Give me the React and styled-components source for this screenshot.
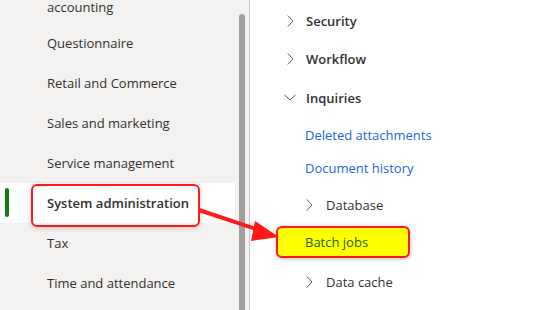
import React from 'react';
import styled, { createGlobalStyle } from 'styled-components';

const GlobalStyle = createGlobalStyle`
  html, body {
    margin: 0;
    padding: 0;
    background: #ffffff;
  }
  body {
    font-family: "Open Sans", "Noto Sans", sans-serif;
    font-size: 13px;
    color: #323130;
  }
`;

/* Page frame */
const Page = styled.div`
  position: relative;
  display: flex;
  width: 545px;
  height: 310px;
  overflow: hidden;
  background: #ffffff;
`;

/* Left module list */
const Sidebar = styled.nav`
  display: flex;
  width: 249px;
  height: 100%;
  background: #f3f2f1;
  border-right: 1px solid #c8c6c4;
  flex-shrink: 0;
  overflow: hidden;
`;

const ModuleList = styled.ul`
  list-style: none;
  margin: -30px 0 0;
  padding: 0;
  width: 235px;
`;

const ModuleItem = styled.li`
  position: relative;
  display: flex;
  align-items: center;
  box-sizing: border-box;
  min-height: 40px;
  padding: ${p => (p.wrapped ? '10px 20px 7px 47px' : '0 20px 0 47px')};
  line-height: ${p => (p.wrapped ? '18px' : '20px')};
  font-weight: ${p => (p.active ? 600 : 400)};
  background: ${p => (p.active ? '#ffffff' : 'transparent')};
  color: #323130;
`;

const ActiveMarker = styled.span`
  position: absolute;
  left: 5px;
  top: 5px;
  width: 4px;
  height: 29px;
  border-radius: 2px;
  background: #107c10;
`;

/* Red annotation frame around a label, kept out of the flow by negative margins */
const Callout = styled.span`
  display: inline-block;
  margin: -9px -11px -14px -16px;
  padding: 7px 9px 12px 14px;
  border: 2px solid #ff1a1a;
  border-radius: 6px;
  box-shadow: 0 1px 5px rgba(0, 0, 0, 0.22);
`;

const ScrollTrack = styled.div`
  flex: 1;
  padding: 14px 0 0 4px;
`;

const ScrollThumb = styled.div`
  width: 6px;
  height: 100%;
  border-radius: 3px 3px 0 0;
  background: #a19f9d;
`;

/* Right tree */
const Tree = styled.div`
  flex: 1;
  padding-top: 2px;
`;

const TreeRow = styled.div`
  display: flex;
  align-items: center;
  height: ${p => p.h}px;
  padding-left: ${p => p.indent}px;
  gap: ${p => p.gap || 0}px;
  font-weight: ${p => (p.strong ? 600 : 400)};
  color: ${p => (p.link ? '#2266e3' : '#323130')};
  line-height: 20px;
  white-space: nowrap;
`;

const ChevronBox = styled.span`
  display: flex;
  align-items: center;
  justify-content: center;
  width: 16px;
  height: 16px;
`;

const Highlight = styled.span`
  display: inline-block;
  box-sizing: border-box;
  width: 134px;
  height: 32px;
  margin-left: -29px;
  padding: 4px 0 4px 27px;
  border: 2px solid #ff1a1a;
  border-radius: 6px;
  background: #ffff00;
  color: #226600;
  box-shadow: 0 1px 5px rgba(0, 0, 0, 0.25);
`;

const ArrowLayer = styled.svg`
  position: absolute;
  left: 0;
  top: 0;
  pointer-events: none;
`;

const Chevron = ({ down }) => (
  <ChevronBox>
    {down ? (
      <svg width="12" height="7" viewBox="0 0 12 7">
        <path d="M0.5 0.8 L6 6 L11.5 0.8" fill="none" stroke="#605e5c" strokeWidth="1" />
      </svg>
    ) : (
      <svg width="7" height="12" viewBox="0 0 7 12">
        <path d="M0.8 0.5 L6 6 L0.8 11.5" fill="none" stroke="#605e5c" strokeWidth="1" />
      </svg>
    )}
  </ChevronBox>
);

const modules = [
  'Questionnaire',
  'Retail and Commerce',
  'Sales and marketing',
  'Service management',
  'System administration',
  'Tax',
  'Time and attendance',
];

export default function App() {
  return (
    <Page>
      <GlobalStyle />
      <Sidebar>
        <ModuleList>
          <ModuleItem wrapped>Project management and accounting</ModuleItem>
          {modules.map(m =>
            m === 'System administration' ? (
              <ModuleItem key={m} active>
                <ActiveMarker />
                <Callout>{m}</Callout>
              </ModuleItem>
            ) : (
              <ModuleItem key={m}>{m}</ModuleItem>
            )
          )}
        </ModuleList>
        <ScrollTrack>
          <ScrollThumb />
        </ScrollTrack>
      </Sidebar>

      <Tree>
        <TreeRow h={38} indent={32} gap={8} strong>
          <Chevron />
          Security
        </TreeRow>
        <TreeRow h={38} indent={32} gap={8} strong>
          <Chevron />
          Workflow
        </TreeRow>
        <TreeRow h={39} indent={32} gap={8} strong>
          <Chevron down />
          Inquiries
        </TreeRow>
        <TreeRow h={35} indent={55} link>
          Deleted attachments
        </TreeRow>
        <TreeRow h={32} indent={55} link>
          Document history
        </TreeRow>
        <TreeRow h={42} indent={51} gap={9}>
          <Chevron />
          Database
        </TreeRow>
        <TreeRow h={32} indent={55}>
          <Highlight>Batch jobs</Highlight>
        </TreeRow>
        <TreeRow h={48} indent={51} gap={9}>
          <Chevron />
          Data cache
        </TreeRow>
      </Tree>

      <ArrowLayer width="545" height="310" viewBox="0 0 545 310">
        <line x1="199" y1="210" x2="262" y2="231" stroke="#ff1a1a" strokeWidth="4" />
        <polygon points="279,237 255,221 251,241" fill="#ff1a1a" />
      </ArrowLayer>
    </Page>
  );
}
